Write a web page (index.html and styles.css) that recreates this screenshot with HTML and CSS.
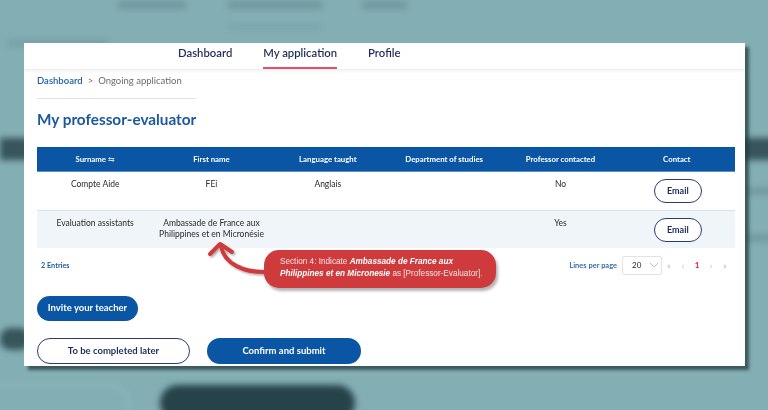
FILE: index.html
```html
<!DOCTYPE html>
<html lang="en">
<head>
<meta charset="utf-8">
<title>My professor-evaluator</title>
<link rel="stylesheet" href="styles.css">
</head>
<body>
<div class="backdrop" aria-hidden="true">
  <span class="bg-word bg-t1"></span>
  <span class="bg-word bg-t2"></span>
  <span class="bg-word bg-t3"></span>
  <span class="bg-line"></span>
  <span class="bg-crumb"></span>
  <span class="bg-band bg-band-l"></span>
  <span class="bg-band bg-band-r"></span>
  <span class="bg-faint bg-f1"></span>
  <span class="bg-faint bg-f2"></span>
  <span class="bg-band bg-btn-l"></span>
  <span class="bg-outline"></span>
  <span class="bg-pill"></span>
</div>

<main class="card">
  <nav class="nav">
    <a class="tab">Dashboard</a>
    <a class="tab active">My application</a>
    <a class="tab">Profile</a>
  </nav>

  <div class="content">
    <div class="crumbs"><a class="crumb-link">Dashboard</a><span class="crumb-sep">&gt;</span><span>Ongoing application</span></div>
    <div class="divider"></div>
    <h1 class="title">My professor-evaluator</h1>

    <table class="grid">
      <thead>
        <tr>
          <th>Surname <span class="sort">&#8646;</span></th>
          <th>First name</th>
          <th>Language taught</th>
          <th>Department of studies</th>
          <th>Professor contacted</th>
          <th>Contact</th>
        </tr>
      </thead>
      <tbody>
        <tr>
          <td>Compte Aide</td>
          <td>FEi</td>
          <td>Anglais</td>
          <td></td>
          <td>No</td>
          <td><button class="btn-email">Email</button></td>
        </tr>
        <tr class="alt">
          <td>Evaluation assistants</td>
          <td>Ambassade de France aux<br>Philippines et en Micronésie</td>
          <td></td>
          <td></td>
          <td>Yes</td>
          <td><button class="btn-email">Email</button></td>
        </tr>
      </tbody>
    </table>

    <div class="footer-row">
      <span class="entries">2 Entries</span>
      <div class="pager">
        <span class="lpp">Lines per page</span>
        <span class="select">20 <svg class="chev" width="10" height="6" viewBox="0 0 10 6"><path d="M1 1l4 4 4-4" fill="none" stroke="#b9bec8" stroke-width="1"/></svg></span>
        <span class="pg">&laquo;</span>
        <span class="pg">&lsaquo;</span>
        <span class="pg cur">1</span>
        <span class="pg">&rsaquo;</span>
        <span class="pg">&raquo;</span>
      </div>
    </div>

    <button class="btn-primary btn-invite">Invite your teacher</button>

    <div class="actions">
      <button class="btn-outline">To be completed later</button>
      <button class="btn-primary btn-wide">Confirm and submit</button>
    </div>
  </div>

  <svg class="arrow" width="80" height="50" viewBox="190 235 80 50" aria-hidden="true">
    <defs>
      <filter id="sh" x="-20%" y="-20%" width="140%" height="140%">
        <feDropShadow dx="1.5" dy="1.5" stdDeviation="1" flood-color="#000" flood-opacity="0.35"/>
      </filter>
    </defs>
    <g filter="url(#sh)" fill="none" stroke="#cf3b3c" stroke-width="4" stroke-linecap="round" stroke-linejoin="round">
      <path d="M268 272 C244 273 224 264 221 246"/>
      <path d="M210 254 L220 244 L232 252"/>
    </g>
  </svg>

  <div class="callout">Section 4: Indicate <b><i>Ambassade de France aux Philippines et en Micronesie</i></b> as [Professor-Evaluator].</div>
</main>
</body>
</html>
```

FILE: styles.css
```css
* { box-sizing: border-box; }

html, body {
  margin: 0;
  width: 768px;
  height: 410px;
  overflow: hidden;
}

body {
  background: #83aeb4;
  font-family: Lato, "Open Sans", "Noto Sans", sans-serif;
  position: relative;
  padding: 43px 0 0 24px;
}

/* blurred page behind the modal */
.backdrop {
  position: absolute;
  inset: 0;
  filter: blur(3px);
}
.bg-word {
  position: absolute;
  top: 1px;
  height: 8px;
  border-radius: 3px;
  background: rgba(40, 70, 80, 0.22);
}
.bg-t1 { left: 118px; width: 68px; }
.bg-t2 { left: 228px; width: 94px; }
.bg-t3 { left: 362px; width: 45px; }
.bg-line {
  position: absolute;
  left: 228px; top: 26px; width: 94px; height: 2px;
  background: rgba(40, 70, 80, 0.22);
}
.bg-crumb {
  position: absolute;
  left: 8px; top: 40px; width: 100px; height: 6px;
  background: rgba(40, 70, 80, 0.15);
}
.bg-band {
  position: absolute;
  background: rgba(30, 55, 62, 0.75);
}
.bg-band-l { left: 0; top: 138px; width: 30px; height: 22px; }
.bg-band-r { left: 740px; top: 138px; width: 40px; height: 22px; }
.bg-btn-l { left: 0; top: 328px; width: 30px; height: 22px; border-radius: 10px; }
.bg-faint {
  position: absolute;
  left: 745px; width: 30px; height: 6px;
  background: rgba(40, 70, 80, 0.25);
}
.bg-f1 { top: 188px; }
.bg-f2 { top: 235px; }
.bg-outline {
  position: absolute;
  left: -30px; top: 385px; width: 160px; height: 36px;
  border: 2px solid rgba(160, 200, 205, 0.6);
  border-radius: 20px;
}
.bg-pill {
  position: absolute;
  left: 160px; top: 385px; width: 195px; height: 36px;
  background: #27434a;
  border-radius: 20px;
}

/* modal card */
.card {
  position: relative;
  z-index: 1;
  width: 721px;
  height: 323px;
  background: #fff;
  overflow: hidden;
  box-shadow: 4px 4px 3px rgba(35, 60, 66, 0.75);
}

.nav {
  display: flex;
  gap: 31px;
  height: 26px;
  padding-left: 154px;
  box-shadow: 0 2px 3px rgba(0, 0, 0, 0.07);
}
.tab {
  display: block;
  height: 26px;
  padding-top: 2px;
  border-bottom: 2px solid transparent;
  font-size: 11.3px;
  line-height: 15px;
  font-weight: 600;
  color: #1f2c5c;
}
.tab.active { border-bottom-color: #e0506a; }

.content {
  padding: 0 10px 0 13px;
}

.crumbs {
  margin-top: 6px;
  font-size: 9.5px;
  line-height: 12px;
  color: #6b6b6b;
}
.crumb-link { color: #2160a8; font-weight: 600; }
.crumb-sep { margin: 0 5px; }

.divider {
  margin-top: 11px;
  width: 159px;
  height: 1px;
  background: #dbe5ee;
}

.title {
  margin: 10px 0 0;
  font-size: 15.3px;
  line-height: 20px;
  font-weight: 700;
  color: #1c58a0;
}

.grid {
  margin-top: 18px;
  width: 698px;
  border-collapse: collapse;
  table-layout: fixed;
  font-size: 8.5px;
  color: #2a2a2a;
}
.grid th {
  height: 24px;
  padding: 0 4px;
  background: #0b56a4;
  color: #fff;
  font-weight: 700;
  font-size: 7.8px;
  border-bottom: 1px solid #5d8ec6;
}
.sort { font-weight: 400; font-size: 8px; color: #cfdbef; }
.grid td {
  padding: 7px 4px 7px;
  text-align: center;
  vertical-align: top;
  line-height: 11px;
}
.grid tr.alt td {
  background: #f0f5f9;
  border-top: 1px solid #d6e4f1;
  padding-bottom: 6px;
}

.btn-email {
  display: inline-block;
  width: 48px;
  height: 24px;
  border: 1.5px solid #2d3a6c;
  border-radius: 14px;
  background: #fff;
  color: #1f2c5c;
  font: 700 9px/1 Lato, "Open Sans", sans-serif;
  margin-left: 2px;
}

.footer-row {
  margin-top: 8px;
  height: 19px;
  display: flex;
  align-items: center;
  justify-content: space-between;
  padding: 0 3px 0 4px;
}
.entries {
  font-size: 7.3px;
  font-weight: 700;
  color: #2160a8;
}
.pager {
  display: flex;
  align-items: center;
}
.lpp {
  font-size: 7.5px;
  font-weight: 600;
  color: #2160a8;
  margin-right: 5px;
}
.select {
  display: flex;
  align-items: center;
  gap: 8px;
  width: 40px;
  height: 19px;
  padding-left: 9px;
  border: 1px solid #dfe3ea;
  border-radius: 2px;
  font-size: 8px;
  color: #2a2a2a;
}
.chev { display: block; }
.pg {
  width: 14px;
  text-align: center;
  font-size: 9px;
  color: #b9bec8;
}
.cur { color: #e0203a; font-weight: 700; font-size: 8px; }

.btn-primary {
  display: block;
  height: 25px;
  border: 0;
  border-radius: 14px;
  background: #0b56a4;
  color: #fff;
  font: 700 9.5px/1 Lato, "Open Sans", sans-serif;
}
.btn-invite {
  margin-top: 21px;
  width: 101px;
}

.actions {
  margin-top: 17px;
  display: flex;
  gap: 17px;
}
.btn-outline {
  width: 153px;
  height: 26px;
  border: 1.5px solid #2d3a6c;
  border-radius: 14px;
  background: #fff;
  color: #1f2c5c;
  font: 700 9.5px/1 Lato, "Open Sans", sans-serif;
}
.btn-wide {
  width: 154px;
  height: 26px;
}

/* annotation overlay */
.arrow {
  position: absolute;
  left: 166px;
  top: 192px;
}
.callout {
  position: absolute;
  left: 240px;
  top: 207px;
  width: 232px;
  height: 38px;
  padding: 6px 10px 0 16px;
  background: #cf3b3c;
  border-radius: 15px;
  box-shadow: 2px 3px 3px rgba(0, 0, 0, 0.3);
  color: #f7e6e6;
  font-family: "Liberation Sans", Arial, sans-serif;
  font-size: 8.2px;
  line-height: 12px;
}
.callout b { color: #fff; }
```
